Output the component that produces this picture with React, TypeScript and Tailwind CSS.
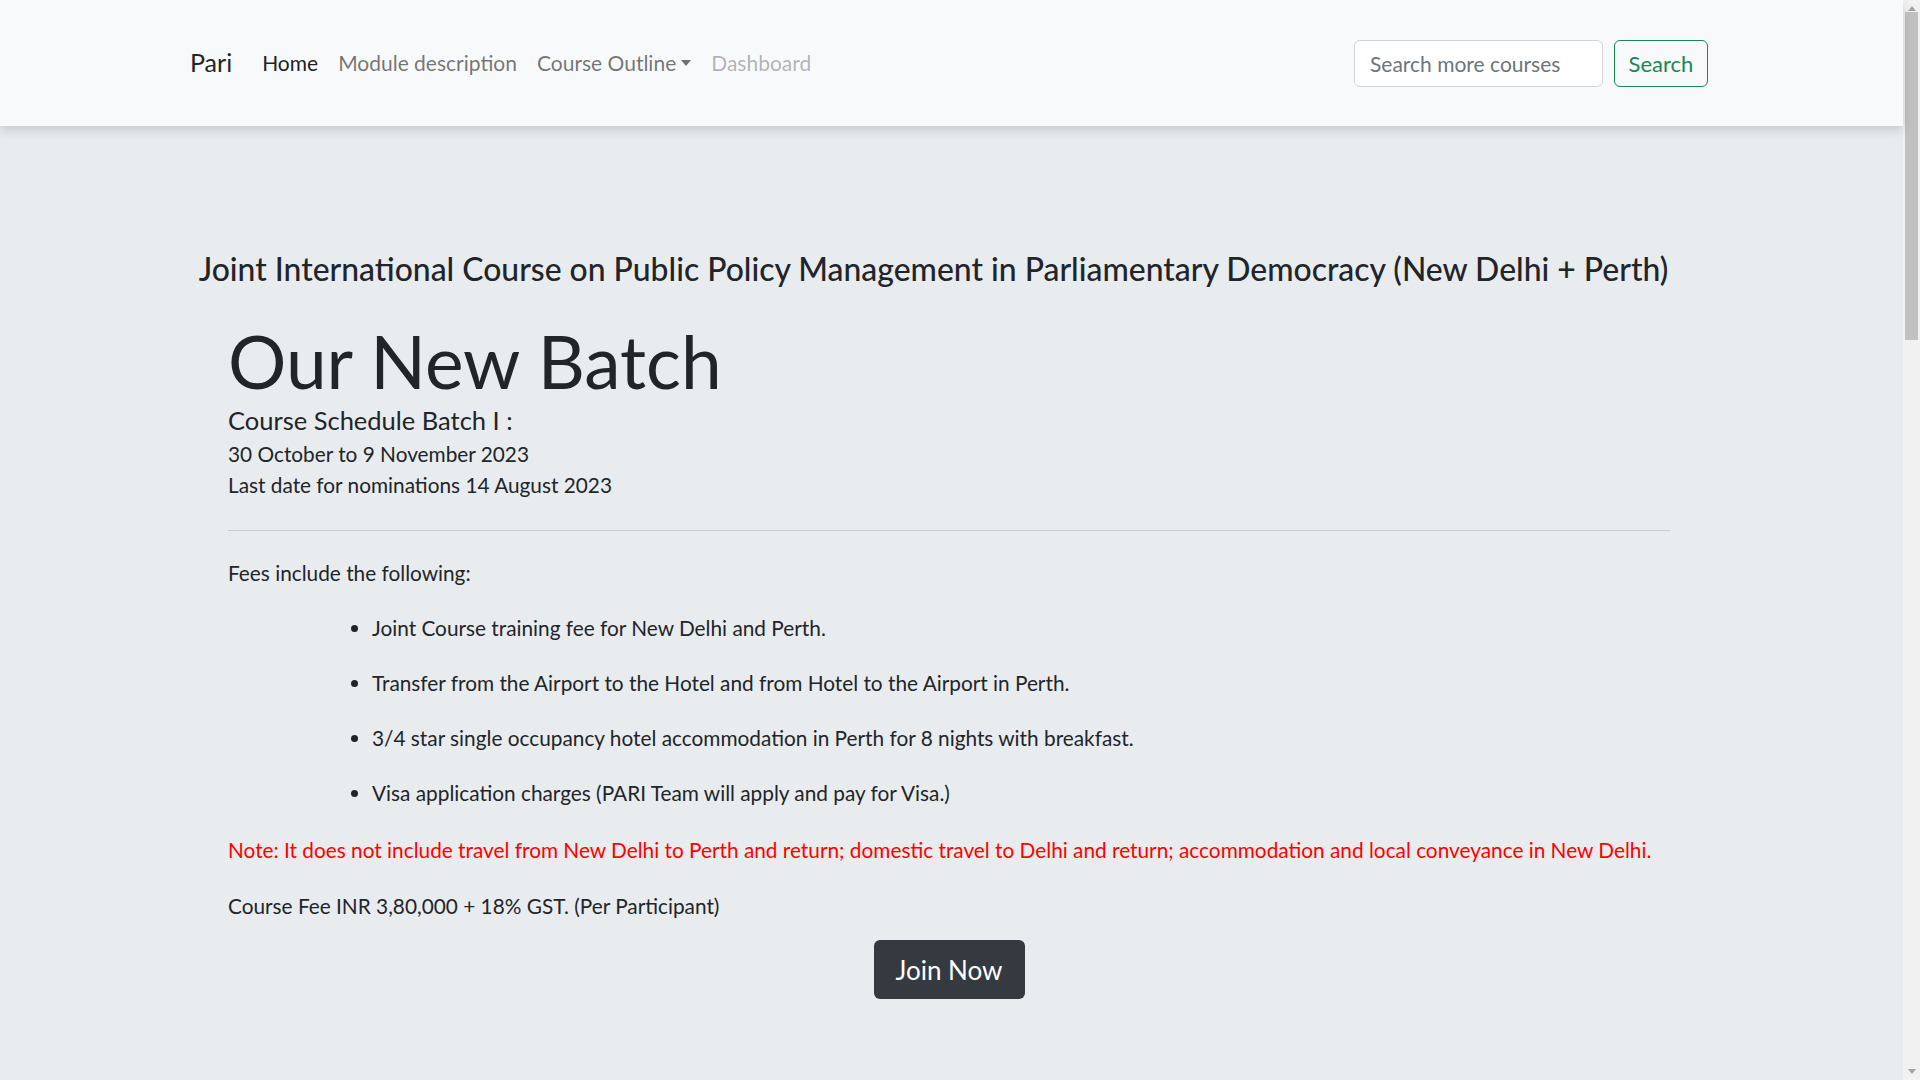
const fees = [
  'Joint Course training fee for New Delhi and Perth.',
  'Transfer from the Airport to the Hotel and from Hotel to the Airport in Perth.',
  '3/4 star single occupancy hotel accommodation in Perth for 8 nights with breakfast.',
  'Visa application charges (PARI Team will apply and pay for Visa.)',
];

function Navbar() {
  return (
    <nav className="relative z-10 flex h-[126px] shrink-0 items-center justify-between bg-[#f8f9fa] pl-[190px] pr-[195px] shadow-[0_4px_10px_rgba(0,0,0,0.15)]">
      <div className="flex items-center text-[21px]">
        <a className="mr-[20px] text-[25px] text-[#212529]">Pari</a>
        <a className="px-[10px] text-[rgba(0,0,0,0.9)]">Home</a>
        <a className="px-[10px] text-[rgba(0,0,0,0.55)]">Module description</a>
        <a className="flex items-center px-[10px] text-[rgba(0,0,0,0.55)]">
          Course Outline
          <span className="ml-[5px] inline-block h-0 w-0 border-x-[5px] border-t-[6px] border-x-transparent border-t-current" />
        </a>
        <a className="px-[10px] text-[rgba(0,0,0,0.3)]">Dashboard</a>
      </div>
      <form className="flex items-center gap-[11px]" onSubmit={(e) => e.preventDefault()}>
        <input
          className="h-[47px] w-[249px] rounded-[6px] border border-[#ced4da] bg-white px-[15px] text-[21px] text-[#212529] placeholder:text-[#6c757d] outline-none"
          placeholder="Search more courses"
        />
        <button className="h-[47px] w-[94px] rounded-[6px] border border-[#198754] text-[22px] text-[#198754]">
          Search
        </button>
      </form>
    </nav>
  );
}

// stand-in for the browser's scrollbar seen in the screenshot
function Scrollbar() {
  return (
    <div className="flex w-[17px] shrink-0 flex-col bg-[#f1f1f1]">
      <div className="flex h-[17px] items-center justify-center">
        <span className="h-0 w-0 border-x-[4px] border-b-[5px] border-x-transparent border-b-[#a3a3a3]" />
      </div>
      <div className="mx-[2px] mt-[-5px] h-[328px] bg-[#c1c1c1]" />
      <div className="flex-1" />
      <div className="flex h-[17px] items-center justify-center">
        <span className="h-0 w-0 border-x-[4px] border-t-[5px] border-x-transparent border-t-[#a3a3a3]" />
      </div>
    </div>
  );
}

export default function App() {
  return (
    <div className="flex h-screen overflow-hidden bg-[#e9ecef] font-['Lato',sans-serif] text-[#212529]">
      <div className="flex min-w-0 flex-1 flex-col">
        <Navbar />
        <main className="pt-[126px]">
          <div className="flex justify-center pl-[200px] pr-[236px]">
            <h3 className="whitespace-nowrap text-[31.9px] font-medium leading-[34px]">
              Joint International Course on Public Policy Management in Parliamentary Democracy (New Delhi + Perth)
            </h3>
          </div>

          <div className="pl-[228px] pr-[233px] text-[20.8px] leading-[30px]">
            <h1 className="mt-[35px] text-[73px] leading-[80px]">Our New Batch</h1>
            <h4 className="mt-[5px] text-[25.5px] leading-[29px]">Course Schedule Batch I :</h4>
            <p className="mt-[4px]">30 October to 9 November 2023</p>
            <p className="mt-[1px]">Last date for nominations 14 August 2023</p>

            <hr className="mt-[30px] border-t border-[#c8cbcf]" />

            <p className="mt-[27px]">Fees include the following:</p>
            <ul className="list-disc pl-[144px]">
              {fees.map((item) => (
                <li key={item} className="mt-[25px]">
                  {item}
                </li>
              ))}
            </ul>

            <p className="mt-[27px] text-[#ff0000]">
              Note: It does not include travel from New Delhi to Perth and return; domestic travel to Delhi and return; accommodation and local conveyance in New Delhi.
            </p>
            <p className="mt-[26px]">Course Fee INR 3,80,000 + 18% GST. (Per Participant)</p>

            <div className="mt-[19px] flex justify-center">
              <button className="h-[59px] w-[151px] rounded-[6px] bg-[#343a40] text-[26px] text-white">
                Join Now
              </button>
            </div>
          </div>
        </main>
      </div>
      <Scrollbar />
    </div>
  );
}
